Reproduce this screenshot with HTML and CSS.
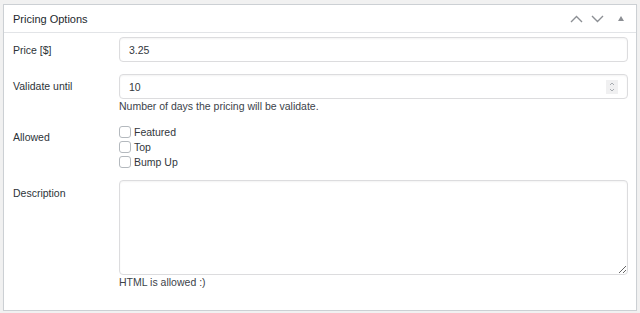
FILE: index.html
```html
<!DOCTYPE html>
<html lang="en">
<head>
  <meta charset="UTF-8" />
  <title>Pricing Options</title>
  <link rel="stylesheet" href="styles.css">
</head>
<body>
  <div class="postbox">
    <div class="postbox-header">
      <h2>Pricing Options</h2>
      <div class="handle-actions">
        <svg class="arrow" width="13" height="8" viewBox="0 0 13 8"><path d="M1 7 L6.5 1.5 L12 7" fill="none" stroke="#8c8f94" stroke-width="1.4"/></svg>
        <svg class="arrow" width="13" height="8" viewBox="0 0 13 8"><path d="M1 1 L6.5 6.5 L12 1" fill="none" stroke="#8c8f94" stroke-width="1.4"/></svg>
        <svg class="toggle" width="6" height="5" viewBox="0 0 6 5"><path d="M0 5 L3 0 L6 5 Z" fill="#8c8f94"/></svg>
      </div>
    </div>
    <div class="inside">
      <div class="row row-price">
        <label class="field-label" for="price">Price [$]</label>
        <div class="field">
          <input type="text" id="price" value="3.25" />
        </div>
      </div>

      <div class="row row-validate">
        <label class="field-label" for="validate">Validate until</label>
        <div class="field">
          <div class="number-wrap">
            <input type="text" id="validate" value="10" />
            <span class="spinner">
              <svg width="12" height="14" viewBox="0 0 12 14"><path d="M4 5 L6 3 L8 5 M4 9 L6 11 L8 9" fill="none" stroke="#9ea3a8" stroke-width="0.9"/></svg>
            </span>
          </div>
          <p class="description">Number of days the pricing will be validate.</p>
        </div>
      </div>

      <div class="row row-allowed">
        <span class="field-label">Allowed</span>
        <div class="field checklist">
          <label><input type="checkbox" /> Featured</label>
          <label><input type="checkbox" /> Top</label>
          <label><input type="checkbox" /> Bump Up</label>
        </div>
      </div>

      <div class="row row-desc">
        <label class="field-label" for="desc">Description</label>
        <div class="field">
          <textarea id="desc"></textarea>
          <p class="description">HTML is allowed :)</p>
        </div>
      </div>
    </div>
  </div>
</body>
</html>
```

FILE: styles.css
```css
body {
  margin: 0;
  padding: 4px 4px 0 3px;
  background-color: #f1f1f1;
  font-family: 'Liberation Sans', Arial, sans-serif;
  font-size: 10.5px;
  color: #32373c;
}
.postbox {
  width: 632px;
  height: 305px;
  background: #fff;
  border: 1px solid #ccd0d4;
  box-shadow: 0 1px 1px rgba(0,0,0,0.04);
}
.postbox-header {
  display: flex;
  align-items: center;
  justify-content: space-between;
  height: 27px;
  border-bottom: 1px solid #e2e4e7;
  padding: 0 12px 0 9px;
}
.postbox-header h2 {
  margin: 0;
  font-size: 11px;
  font-weight: normal;
  color: #23282d;
}
.handle-actions {
  display: flex;
  align-items: center;
}
.arrow {
  margin-left: 8px;
}
.toggle {
  margin-left: 14px;
}
.inside {
  padding: 4px 8px 0 9px;
}
.row {
  display: flex;
}
.field-label {
  width: 106px;
  flex-shrink: 0;
  color: #2c3338;
}
.field {
  flex: 1;
}
.row-price {
  align-items: center;
}
.row-validate {
  margin-top: 12px;
}
.row-validate .field-label {
  padding-top: 6px;
}
.row-allowed {
  margin-top: 11px;
}
.row-allowed .field-label {
  padding-top: 7px;
}
.row-desc {
  margin-top: 11px;
}
.row-desc .field-label {
  padding-top: 7px;
}
input[type="text"] {
  display: block;
  box-sizing: border-box;
  width: 100%;
  height: 25px;
  margin: 0;
  padding: 0 9px;
  border: 1px solid #dcdcde;
  border-radius: 4px;
  box-shadow: inset 0 1px 2px rgba(0,0,0,0.05);
  font-family: inherit;
  font-size: 10.5px;
  color: #32373c;
}
.number-wrap {
  position: relative;
}
.spinner {
  position: absolute;
  right: 10px;
  top: 6px;
  width: 12px;
  height: 14px;
  background: #f0f0f1;
}
.spinner svg {
  display: block;
}
.description {
  margin: 0;
  line-height: 14px;
  color: #3c434a;
}
.checklist label {
  display: flex;
  align-items: center;
  height: 15px;
  color: #32373c;
}
.checklist input {
  appearance: none;
  width: 12px;
  height: 12px;
  margin: 0 3px 0 0;
  border: 1px solid #b4b9be;
  border-radius: 3px;
  background: #fff;
  box-sizing: border-box;
}
textarea {
  display: block;
  box-sizing: border-box;
  width: 100%;
  height: 95px;
  margin: 0;
  border: 1px solid #dcdcde;
  border-radius: 4px;
  box-shadow: inset 0 1px 2px rgba(0,0,0,0.05);
}
```
